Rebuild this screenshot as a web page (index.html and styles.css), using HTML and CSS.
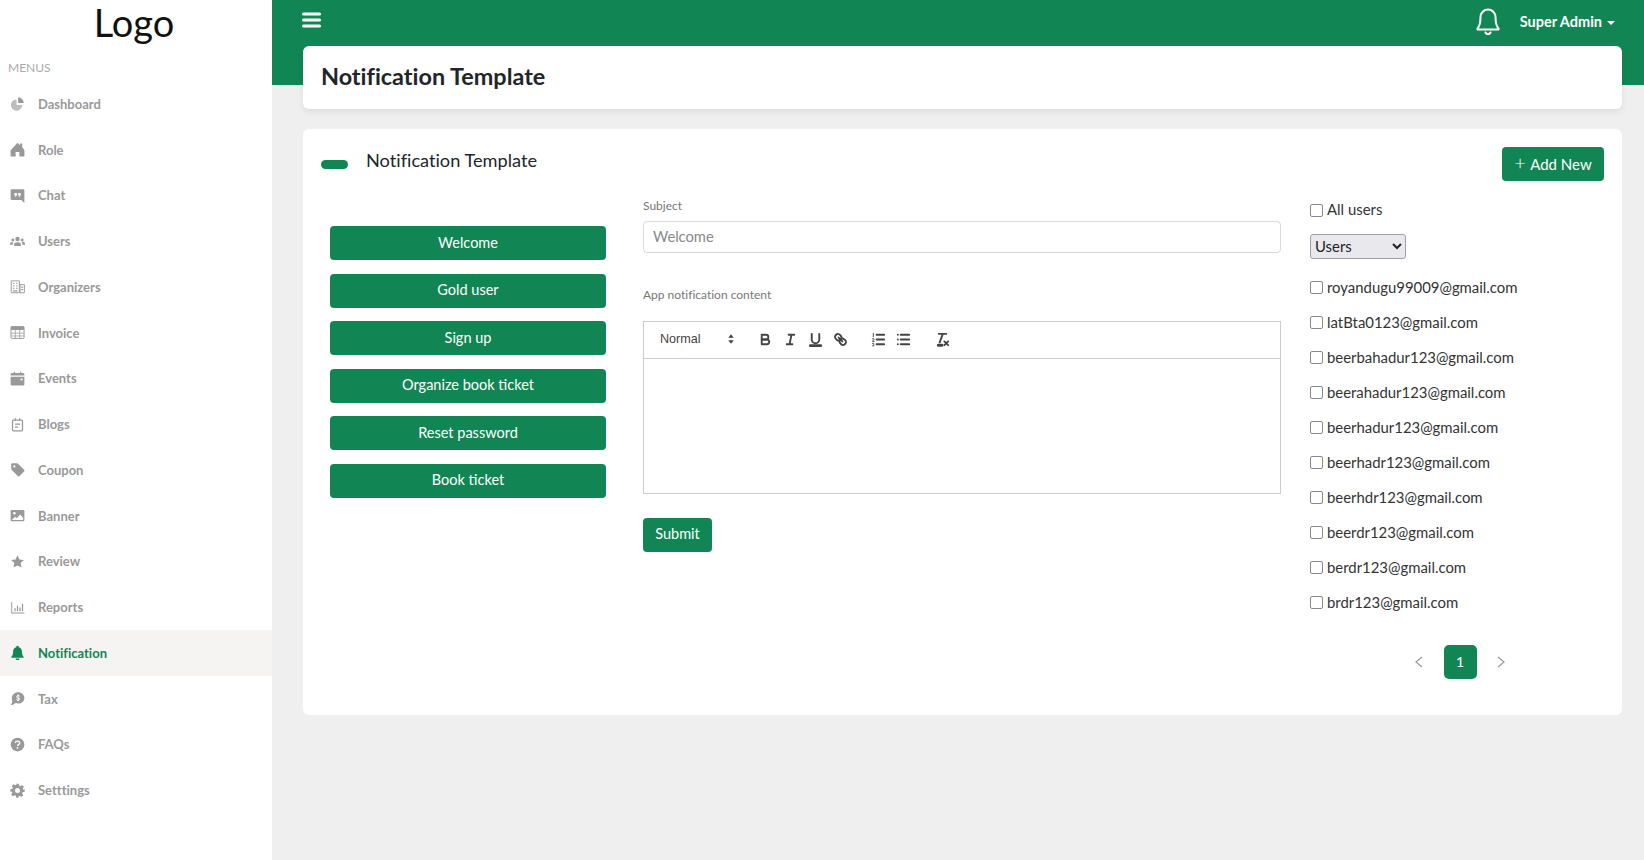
FILE: index.html
```html
<!DOCTYPE html>
<html lang="en">
  <head>
    <meta charset="UTF-8" />
    <meta name="viewport" content="width=device-width, initial-scale=1.0" />
    <title>Notification Template</title>
    <link rel="stylesheet" href="styles.css">
  </head>

  <body>
    <div class="app">
      <aside class="sidebar">
        <div class="logo">Logo</div>
        <div class="menu-title">MENUS</div>
        <ul class="nav">
          <li class="nav-item">
            <svg class="nav-icon" viewBox="0 0 24 24"><path d="M10.500 5.500v9h9a9 9 0 1 1-9-9z" opacity=".65"/><path d="M13 2a9.500 9.500 0 0 1 9 9h-9z"/></svg>
            Dashboard
          </li>
          <li class="nav-item">
            <svg class="nav-icon" viewBox="0 0 24 24"><path d="M12 1l4 4V2.500h3.500V8L23 13v10h-8v-7H9v7H1V13z"/></svg>
            Role
          </li>
          <li class="nav-item">
            <svg class="nav-icon" viewBox="0 0 24 24"><path d="M3 2h18a2 2 0 0 1 2 2v20l-5-5H3a2 2 0 0 1-2-2V4a2 2 0 0 1 2-2z"/><path d="M7 8h4v3.500L9 14H7.500l1-2.500H7zM13 8h4v3.500L15 14h-1.500l1-2.500H13z" fill="#fff"/></svg>
            Chat
          </li>
          <li class="nav-item">
            <svg class="nav-icon" viewBox="0 0 24 24"><circle cx="12" cy="8" r="3.500"/><path d="M6.500 19v-1.500A4.500 4.500 0 0 1 11 13h2a4.500 4.500 0 0 1 4.500 4.500V19z"/><circle cx="4.500" cy="9.500" r="2.300"/><circle cx="19.500" cy="9.500" r="2.300"/><path d="M0 17v-1.500A3 3 0 0 1 3 13h2.500a6 6 0 0 0-1 4zM24 17v-1.500a3 3 0 0 0-3-3h-2.500a6 6 0 0 1 1 4.500z"/></svg>
            Users
          </li>
          <li class="nav-item">
            <svg class="nav-icon" viewBox="0 0 24 24"><path d="M2 3h13v19H2zM16 9h7v13h-7z" fill="none" stroke="currentColor" stroke-width="1.500"/><path d="M5 6h2v2H5zM10 6h2v2h-2zM5 10h2v2H5zM10 10h2v2h-2zM5 14h2v2H5zM10 14h2v2h-2zM5 18h7v2H5zM18 12h3v2h-3zM18 16h3v2h-3z"/></svg>
            Organizers
          </li>
          <li class="nav-item">
            <svg class="nav-icon" viewBox="0 0 24 24"><rect x="1.500" y="2.500" width="21" height="19" rx="1.500" fill="none" stroke="currentColor" stroke-width="1.500"/><path d="M1.500 2.500h21V8h-21z"/><path d="M1.500 13h21M1.500 17.500h21M8.500 8v13.500M15.500 8v13.500" stroke="currentColor" stroke-width="1.200"/></svg>
            Invoice
          </li>
          <li class="nav-item">
            <svg class="nav-icon" viewBox="0 0 24 24"><path d="M6 1h2v2h8V1h2v2h3a2 2 0 0 1 2 2v2H1V5a2 2 0 0 1 2-2h3zM1 9h22v12a2 2 0 0 1-2 2H3a2 2 0 0 1-2-2z"/><rect x="17" y="12" width="3" height="3" fill="#fff"/></svg>
            Events
          </li>
          <li class="nav-item">
            <svg class="nav-icon" viewBox="0 0 24 24"><rect x="4" y="5" width="16" height="17" rx="1.500" fill="none" stroke="currentColor" stroke-width="2"/><path d="M7.500 2h2v4h-2zM14.500 2h2v4h-2zM8 10.500h8v2H8zM8 15h5v2H8z"/></svg>
            Blogs
          </li>
          <li class="nav-item">
            <svg class="nav-icon" viewBox="0 0 24 24"><path d="M2 3.500A1.500 1.500 0 0 1 3.500 2H12l10.500 10.500a2 2 0 0 1 0 2.800l-7.200 7.200a2 2 0 0 1-2.800 0L2 12z"/><circle cx="7" cy="7" r="1.800" fill="#fff"/></svg>
            Coupon
          </li>
          <li class="nav-item">
            <svg class="nav-icon" viewBox="0 0 24 24"><path d="M3 3h18a2 2 0 0 1 2 2v14a2 2 0 0 1-2 2H3a2 2 0 0 1-2-2V5a2 2 0 0 1 2-2z"/><path d="M3 19l5-5 3 2.500 5-6 5 5V19z" fill="#fff"/><circle cx="7" cy="8.500" r="2" fill="#fff"/></svg>
            Banner
          </li>
          <li class="nav-item">
            <svg class="nav-icon" viewBox="0 0 24 24"><path d="M12 2l3.100 6.600 7.200.9-5.300 5 1.400 7.200L12 18.200l-6.400 3.500L7 14.500l-5.300-5 7.200-.9z"/></svg>
            Review
          </li>
          <li class="nav-item">
            <svg class="nav-icon" viewBox="0 0 24 24"><path d="M2 3h1.500v17H23v1.500H2zM7 13h2v5H7zM11 9h2v9h-2zM15 12h2v6h-2zM19 6h2v12h-2z"/></svg>
            Reports
          </li>
          <li class="nav-item active">
            <svg class="nav-icon" viewBox="0 0 24 24"><path d="M12 1a2 2 0 0 1 2 2v.500A7 7 0 0 1 19 10c0 5 1 7 3 9v1.500H2V19c2-2 3-4 3-9a7 7 0 0 1 5-6.500V3a2 2 0 0 1 2-2zM9 21.500h6a3 3 0 0 1-6 0z"/></svg>
            Notification
          </li>
          <li class="nav-item">
            <svg class="nav-icon" viewBox="0 0 24 24"><path d="M13 2c5.500 0 10 4 10 9s-4.500 9-10 9c-1.500 0-3-.3-4.200-.8C7 21 4 22.500 1 22.500c1.500-1.500 2.500-3.500 2.800-6A8.500 8.500 0 0 1 3 11c0-5 4.500-9 10-9z"/><path d="M15.500 8.500c-.5-1-1.500-1.300-2.500-1.300-1.300 0-2.500.7-2.500 1.900 0 2.700 5 1.300 5 3.800 0 1.300-1.200 2-2.500 2-1.200 0-2.200-.5-2.700-1.500M13 5.500v11" fill="none" stroke="#fff" stroke-width="1.600"/></svg>
            Tax
          </li>
          <li class="nav-item">
            <svg class="nav-icon" viewBox="0 0 24 24"><circle cx="12" cy="12" r="11"/><path d="M8.500 9.500C8.700 7.500 10.200 6.500 12 6.500s3.500 1.100 3.500 3c0 2.800-3.500 2.500-3.500 5" fill="none" stroke="#fff" stroke-width="2.200"/><circle cx="12" cy="17.500" r="1.400" fill="#fff"/></svg>
            FAQs
          </li>
          <li class="nav-item">
            <svg class="nav-icon" viewBox="0 0 24 24"><path d="M10 1h4l.7 3.200 1.900.8 2.800-1.800 2.800 2.800-1.800 2.800.8 1.900L23.500 10v4l-3.300.7-.8 1.900 1.800 2.800-2.800 2.800-2.800-1.800-1.900.8L13.900 23.500h-3.800l-.7-3.300-1.900-.8-2.800 1.800-2.800-2.800 1.800-2.800-.8-1.900L.5 14v-4l3.400-.7.8-1.900-1.800-2.800 2.800-2.800 2.800 1.800 1.900-.8z"/><circle cx="12" cy="12" r="4" fill="#fff"/></svg>
            Setttings
          </li>
        </ul>
      </aside>

      <main class="main">
        <header class="topbar">
          <svg class="burger" viewBox="0 0 19 16"><path d="M1.500 2h16M1.500 8h16M1.500 14h16" fill="none" stroke="#fff" stroke-width="3" stroke-linecap="round"/></svg>
          <div class="top-right">
            <svg class="bell" viewBox="0 0 24 28"><path d="M12 2.500a7.500 7.500 0 0 0-7.500 7.500c0 5.500-.8 9-3 11.500v1h21v-1c-2.200-2.500-3-6-3-11.500A7.500 7.500 0 0 0 12 2.500z" fill="none" stroke="#fff" stroke-width="2" stroke-linejoin="round"/><path d="M9.500 25.500a2.700 2.700 0 0 0 5 0" fill="none" stroke="#fff" stroke-width="2" stroke-linecap="round"/></svg>
            <span class="admin">Super Admin</span>
            <span class="caret"></span>
          </div>
        </header>

        <div class="page-title">
          <h1>Notification Template</h1>
        </div>

        <section class="card">
          <div class="card-head">
            <div class="card-title">
              <span class="pill"></span>
              <h2>Notification Template</h2>
            </div>
            <button class="btn add-btn"><span class="plus">+</span> Add New</button>
          </div>

          <div class="card-body">
            <div class="templates">
              <button class="btn template-btn">Welcome</button>
              <button class="btn template-btn">Gold user</button>
              <button class="btn template-btn">Sign up</button>
              <button class="btn template-btn">Organize book ticket</button>
              <button class="btn template-btn">Reset password</button>
              <button class="btn template-btn">Book ticket</button>
            </div>

            <form class="form">
              <label class="form-label" for="subject">Subject</label>
              <input class="form-input" id="subject" type="text" placeholder="Welcome" />
              <div class="form-label content-label">App notification content</div>

              <div class="editor">
                <div class="toolbar">
                  <span class="picker">Normal
                    <svg class="picker-arrow" viewBox="0 0 18 18"><path d="M5.500 7.500L9 3l3.500 4.500zM5.500 10.500L9 15l3.500-4.500z" fill="#444"/></svg>
                  </span>
                  <span class="tool-group">
                    <svg class="tool" viewBox="0 0 18 18"><path d="M5,4H9.500A2.500,2.500,0,0,1,12,6.500v0A2.500,2.500,0,0,1,9.500,9H5V4Z"/><path d="M5,9h5.500A2.500,2.500,0,0,1,13,11.500v0A2.500,2.500,0,0,1,10.500,14H5V9Z"/></svg>
                    <svg class="tool" viewBox="0 0 18 18"><path d="M7 4h6M5 14h6M8 14l2-10"/></svg>
                    <svg class="tool" viewBox="0 0 18 18"><path d="M5,3V9a4.012,4.012,0,0,0,4,4H9a4.012,4.012,0,0,0,4-4V3"/><rect class="tool-fill" x="3" y="15" width="12" height="1" rx=".5"/></svg>
                    <svg class="tool" viewBox="0 0 18 18"><path d="M7 7l4 4"/><path d="M8.900,4.577a3.476,3.476,0,0,1,.36,4.679A3.476,3.476,0,0,1,4.577,8.900C3.185,7.500,2.035,6.400,4.217,4.217S7.500,3.185,8.900,4.577Z"/><path d="M13.423,9.100a3.476,3.476,0,0,0-4.679-.36,3.476,3.476,0,0,0,.36,4.679c1.392,1.392,2.500,2.542,4.679.36S14.815,10.500,13.423,9.100Z"/></svg>
                  </span>
                  <span class="tool-group">
                    <svg class="tool" viewBox="0 0 18 18"><path d="M7 4h8M7 9h8M7 14h8"/><path class="thin" d="M3.500 2.500V6M2.500 8.300c.8-.7 2-.3 1.800.6-.2.800-1.800 1.300-1.800 2h2M2.500 13.200c.6-.5 1.800-.3 1.800.5 0 .4-.3.600-.6.700.3.100.6.300.6.700 0 .8-1.200 1-1.800.5"/></svg>
                    <svg class="tool" viewBox="0 0 18 18"><path d="M6 4h9M6 9h9M6 14h9M3 4h.01M3 9h.01M3 14h.01"/></svg>
                  </span>
                  <span class="tool-group">
                    <svg class="tool" viewBox="0 0 18 18"><path d="M5 3h8M6 12l3.350-9M11 11l4 4M15 11l-4 4"/><rect class="tool-fill" x="4" y="14.500" width="5" height="1.200" rx=".5"/></svg>
                  </span>
                </div>
                <div class="editor-body"></div>
              </div>

              <button class="btn submit-btn" type="button">Submit</button>
            </form>

            <div class="recipients">
              <label class="check-row all-row"><input type="checkbox" /> All users</label>
              <select class="user-select"><option>Users</option></select>
              <label class="check-row"><input type="checkbox" /> royandugu99009@gmail.com</label>
              <label class="check-row"><input type="checkbox" /> latBta0123@gmail.com</label>
              <label class="check-row"><input type="checkbox" /> beerbahadur123@gmail.com</label>
              <label class="check-row"><input type="checkbox" /> beerahadur123@gmail.com</label>
              <label class="check-row"><input type="checkbox" /> beerhadur123@gmail.com</label>
              <label class="check-row"><input type="checkbox" /> beerhadr123@gmail.com</label>
              <label class="check-row"><input type="checkbox" /> beerhdr123@gmail.com</label>
              <label class="check-row"><input type="checkbox" /> beerdr123@gmail.com</label>
              <label class="check-row"><input type="checkbox" /> berdr123@gmail.com</label>
              <label class="check-row"><input type="checkbox" /> brdr123@gmail.com</label>

              <div class="pagination">
                <svg class="page-arrow" viewBox="0 0 10 14"><path d="M8 2L2 7l6 5" fill="none" stroke="#999" stroke-width="1.200"/></svg>
                <span class="page-num">1</span>
                <svg class="page-arrow" viewBox="0 0 10 14"><path d="M2 2l6 5-6 5" fill="none" stroke="#999" stroke-width="1.200"/></svg>
              </div>
            </div>
          </div>
        </section>
      </main>
    </div>
  </body>
</html>
```

FILE: styles.css
```css
* {
  box-sizing: border-box;
}
body {
  margin: 0;
  background: #efefef;
  font-family: "Lato", "Noto Sans", sans-serif;
  font-variant-ligatures: none;
  color: #212529;
}
.app {
  display: flex;
  height: 860px;
  overflow: hidden;
}

/* sidebar */
.sidebar {
  width: 272px;
  flex-shrink: 0;
  background: #fff;
}
.logo {
  height: 46px;
  padding-right: 4px;
  font-size: 38px;
  line-height: 44px;
  text-align: center;
  color: #111;
}
.menu-title {
  height: 35px;
  padding: 15px 0 0 8px;
  font-size: 12px;
  line-height: 14px;
  color: #aaa;
}
.nav {
  list-style: none;
  margin: 0;
  padding: 0;
}
.nav-item {
  display: flex;
  align-items: center;
  height: 45.75px;
  padding-left: 10px;
  font-size: 13px;
  font-weight: 700;
  color: #999;
}
.nav-item.active {
  background: #f6f3f3;
  color: #118654;
}
.nav-icon {
  width: 15px;
  height: 15px;
  margin-right: 13px;
  fill: currentColor;
  flex-shrink: 0;
}

/* main */
.main {
  flex: 1;
  min-width: 0;
}
.topbar {
  display: flex;
  justify-content: space-between;
  height: 85px;
  padding: 12px 22px 0 30px;
  background: #118654;
}
.burger {
  width: 19px;
  height: 16px;
}
.top-right {
  display: flex;
  align-items: flex-start;
  height: 24px;
  padding-right: 7px;
  color: #fff;
}
.bell {
  width: 24px;
  height: 28px;
  margin: -5px 20px 0 0;
}
.admin {
  margin-top: 1px;
  font-size: 14.500px;
  font-weight: 700;
  line-height: 18px;
}
.caret {
  margin: 9px 0 0 5px;
  border-top: 4px solid #fff;
  border-left: 4px solid transparent;
  border-right: 4px solid transparent;
}
.page-title {
  height: 63px;
  margin: -39px 22px 20px 31px;
  padding-left: 18px;
  background: #fff;
  border-radius: 6px;
  box-shadow: 0 3px 6px rgba(0, 0, 0, 0.08);
  position: relative;
}
.page-title h1 {
  margin: 0;
  font-size: 23.400px;
  font-weight: 700;
  line-height: 61px;
}

.card {
  height: 586px;
  margin: 0 22px 0 31px;
  padding: 18px;
  background: #fff;
  border-radius: 6px;
}
.card-head {
  display: flex;
  justify-content: space-between;
  height: 46px;
}
.card-title {
  display: flex;
  align-items: flex-start;
}
.pill {
  width: 27px;
  height: 9px;
  margin: 13px 18px 0 0;
  background: #118654;
  border-radius: 5px;
}
.card-title h2 {
  margin: 1px 0 0;
  font-size: 18.200px;
  font-weight: 400;
  line-height: 24px;
}
.btn {
  display: block;
  padding: 0 0 1px;
  border: 0;
  border-radius: 4px;
  background: #118654;
  color: #fff;
  font-family: inherit;
  font-size: 14.500px;
  line-height: 20px;
}
.add-btn {
  width: 102px;
  height: 34px;
  font-size: 15px;
}
.plus {
  margin-right: 1px;
  font-size: 20px;
  font-weight: 300;
  line-height: 16px;
}
.card-body {
  display: grid;
  grid-template-columns: 276px 638px 1fr;
  column-gap: 37px;
  padding-left: 9px;
}
.templates {
  padding-top: 33px;
}
.template-btn {
  width: 100%;
  height: 34px;
  margin-bottom: 13.600px;
}

/* form */
.form-label {
  display: block;
  font-size: 12px;
  line-height: 18px;
  color: #777;
}
.form {
  padding-top: 4px;
}
.form-input {
  display: block;
  width: 100%;
  height: 32px;
  margin-top: 6px;
  padding: 0 9px 2px;
  border: 1px solid #d9d9d9;
  border-radius: 4px;
  font-family: inherit;
  font-size: 14.700px;
}
.form-input::placeholder {
  color: #888;
}
.content-label {
  margin-top: 33px;
}
.editor {
  height: 173px;
  margin-top: 16.500px;
  border: 1px solid #ccc;
}
.toolbar {
  display: flex;
  align-items: center;
  height: 37.500px;
  padding-left: 8px;
  border-bottom: 1px solid #ccc;
}
.picker {
  display: flex;
  align-items: center;
  width: 100.500px;
  padding: 0 0 2px 8px;
  font-family: "Liberation Sans", sans-serif;
  font-size: 12.600px;
  color: #444;
}
.picker-arrow {
  width: 14px;
  height: 14px;
  margin-left: auto;
  margin-right: 15px;
}
.tool-group {
  display: flex;
  margin-right: 13.500px;
}
.tool {
  width: 25px;
  height: 17px;
  fill: none;
  stroke: #444;
  stroke-width: 2;
  stroke-linecap: round;
  stroke-linejoin: round;
}
.tool .thin {
  stroke-width: 1;
}
.tool-fill {
  fill: #444;
}
.submit-btn {
  width: 69px;
  height: 34px;
  margin-top: 24px;
}

/* right column */
.recipients {
  margin-left: -8px;
  padding-top: 6px;
}
.check-row {
  display: flex;
  align-items: center;
  height: 35px;
  font-size: 14.900px;
  color: #333;
  gap: 4px;
}
.check-row input {
  appearance: none;
  width: 13px;
  height: 13px;
  margin: 2px 0 0;
  border: 1.500px solid #8a8794;
  border-radius: 2px;
  background: #fff;
}
.all-row {
  height: 20px;
}
.user-select {
  display: block;
  width: 96px;
  height: 25px;
  margin: 15px 0 10px;
  padding-bottom: 2px;
  border: 1px solid #a09fa8;
  border-radius: 3px;
  background-color: #e9e9ed;
  font-family: inherit;
  font-size: 14.900px;
  color: #222;
}
.pagination {
  display: flex;
  align-items: center;
  justify-content: center;
  width: 300px;
  margin-top: 26px;
  gap: 19.500px;
}
.page-arrow {
  width: 10px;
  height: 14px;
}
.page-num {
  width: 33px;
  height: 34px;
  background: #118654;
  border-radius: 5px;
  color: #fff;
  font-size: 14px;
  line-height: 34px;
  text-align: center;
}
```
